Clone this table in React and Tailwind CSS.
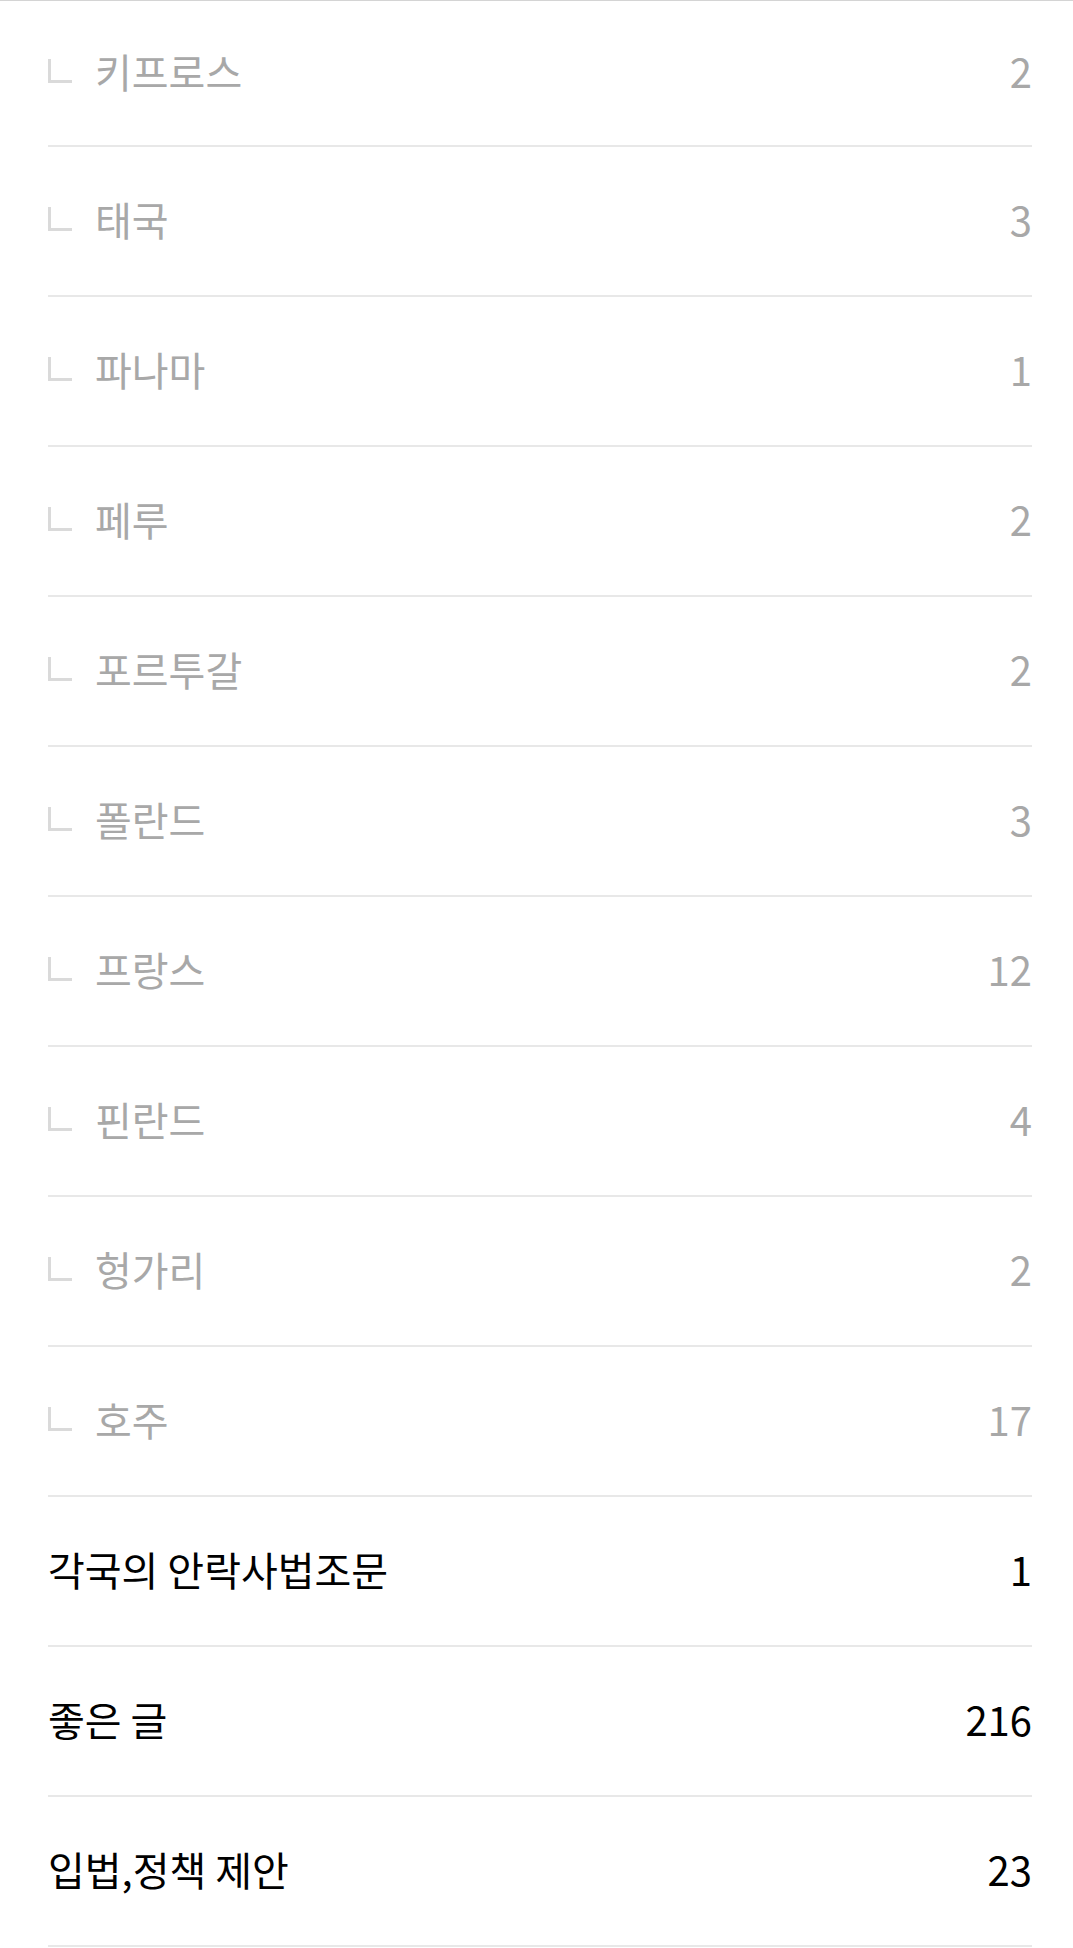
const subItems = [
  { name: '키프로스', count: 2 },
  { name: '태국', count: 3 },
  { name: '파나마', count: 1 },
  { name: '페루', count: 2 },
  { name: '포르투갈', count: 2 },
  { name: '폴란드', count: 3 },
  { name: '프랑스', count: 12 },
  { name: '핀란드', count: 4 },
  { name: '헝가리', count: 2 },
  { name: '호주', count: 17 },
];

const topItems = [
  { name: '각국의 안락사법조문', count: 1 },
  { name: '좋은 글', count: 216 },
  { name: '입법,정책 제안', count: 23 },
];

const font = { fontFamily: '"Noto Sans CJK KR", "Noto Sans", sans-serif' };

const SubRow = ({ item, first }) => (
  <li
    className={`flex items-center justify-between pb-[4px] border-b-2 border-[#e8e8e8] ${first ? 'h-[146px]' : 'h-[150px]'}`}
  >
    <div className="flex items-center">
      <span className="w-[24px] h-[24px] border-l-[3px] border-b-[3px] border-[#dadada] mr-[23px]" />
      <span className="text-[#a8a8a8]">{item.name}</span>
    </div>
    <span className="text-[#a8a8a8]">{item.count}</span>
  </li>
);

const TopRow = ({ item }) => (
  <li className="flex items-center justify-between h-[150px] pb-[4px] border-b-2 border-[#e8e8e8]">
    <span className="text-black">{item.name}</span>
    <span className="text-black">{item.count}</span>
  </li>
);

export default function App() {
  return (
    <div className="bg-white border-t border-[#d4d4d4] w-full" style={font}>
      <ul className="pl-[48px] pr-[41px] text-[40px] leading-none">
        {subItems.map((item, i) => (
          <SubRow key={item.name} item={item} first={i === 0} />
        ))}
        {topItems.map((item) => (
          <TopRow key={item.name} item={item} />
        ))}
      </ul>
    </div>
  );
}
